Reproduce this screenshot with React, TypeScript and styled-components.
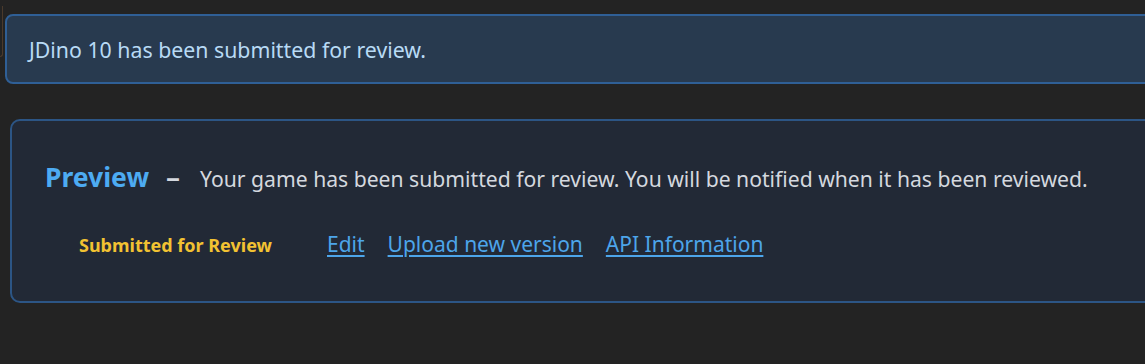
import React from "react";
import styled, { createGlobalStyle } from "styled-components";

const Global = createGlobalStyle`
  html, body {
    margin: 0;
    padding: 0;
    background: #232323;
    overflow: hidden;
  }
  body {
    font-family: "Noto Sans", "Open Sans", sans-serif;
  }
`;

const Page = styled.div`
  width: 1145px;
  height: 364px;
  background: #232323;
  position: relative;
  overflow: hidden;
  padding-top: 14px;
  box-sizing: border-box;
`;

const EdgeMark = styled.div`
  position: absolute;
  left: 0;
  top: 6px;
  width: 2px;
  height: 50px;
  border-right: 1px solid #4a3a2c;
  border-bottom: 1px solid #4a3a2c;
  border-radius: 0 0 3px 0;
`;

const Alert = styled.div`
  margin-left: 5px;
  width: 1160px;
  height: 70px;
  box-sizing: border-box;
  background: #283a4f;
  border: 2px solid #2f5f96;
  border-radius: 8px;
  display: flex;
  align-items: center;
  padding-left: 22px;
  padding-top: 2px;
  color: #b8daf5;
  font-size: 21.3px;
  line-height: 28px;
`;

const Card = styled.div`
  margin-top: 35px;
  margin-left: 10px;
  width: 1160px;
  height: 184px;
  box-sizing: border-box;
  background: #222936;
  border: 2px solid #2c5585;
  border-radius: 10px;
  padding: 40px 0 0 33px;
  display: flex;
  flex-direction: column;
  gap: 36px;
`;

const Header = styled.div`
  display: flex;
  align-items: baseline;
  line-height: 30px;
`;

const Title = styled.span`
  color: #4dabf2;
  font-size: 26.5px;
  font-weight: 700;
`;

const Dash = styled.span`
  color: #d4d8df;
  font-size: 28px;
  font-weight: 600;
  margin: 0 20px 0 17px;
`;

const Desc = styled.span`
  color: #d4d8df;
  font-size: 21.15px;
`;

const Actions = styled.div`
  display: flex;
  align-items: baseline;
  padding-left: 34px;
  line-height: 28px;
`;

const Status = styled.span`
  color: #f2c232;
  font-size: 18px;
  font-weight: 700;
  width: 248px;
`;

const Links = styled.div`
  display: flex;
  gap: 23px;
`;

const Link = styled.a`
  color: #4da5ea;
  font-size: 21px;
  text-decoration: underline;
  text-underline-offset: 3px;
  cursor: pointer;
`;

export default function App() {
  return (
    <>
      <Global />
      <Page>
        <EdgeMark />
        <Alert>JDino 10 has been submitted for review.</Alert>
        <Card>
          <Header>
            <Title>Preview</Title>
            <Dash>–</Dash>
            <Desc>
              Your game has been submitted for review. You will be notified when it has been reviewed.
            </Desc>
          </Header>
          <Actions>
            <Status>Submitted for Review</Status>
            <Links>
              <Link>Edit</Link>
              <Link>Upload new version</Link>
              <Link>API Information</Link>
            </Links>
          </Actions>
        </Card>
      </Page>
    </>
  );
}
